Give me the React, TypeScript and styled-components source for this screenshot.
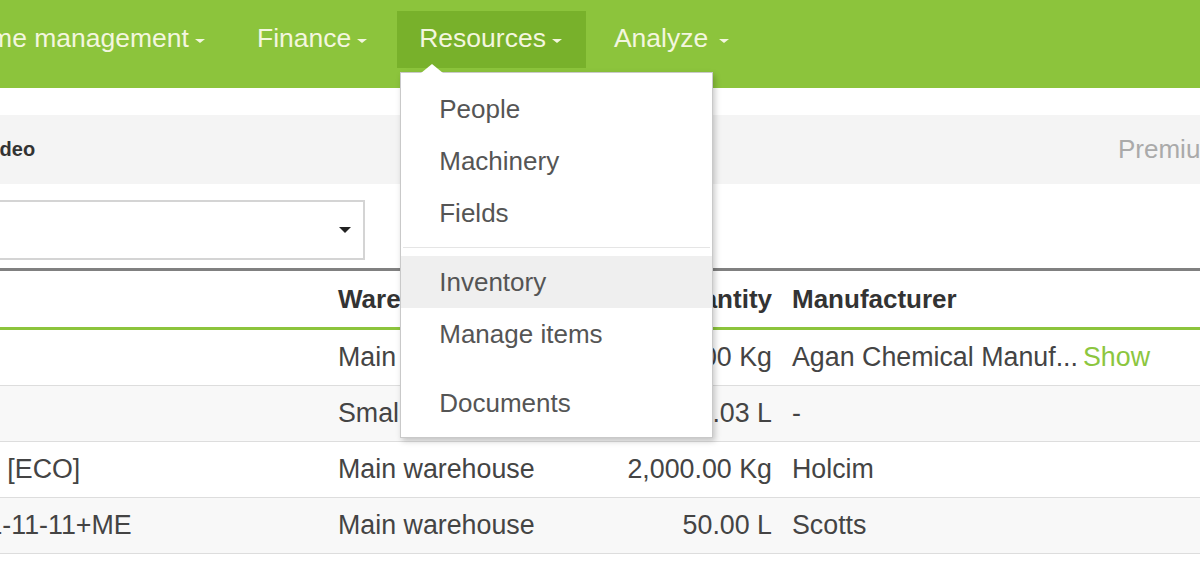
import styled, {createGlobalStyle} from "styled-components";

const GlobalStyle = createGlobalStyle`
  html, body {
    margin: 0;
    padding: 0;
    background: #fff;
    overflow: hidden;
  }
  body {
    font-family: "Liberation Sans", Arial, sans-serif;
  }
`

type NavEntry = { label: string, active?: boolean, wide?: boolean }

const navItems: NavEntry[] = [
    {label: "Time management"},
    {label: "Finance"},
    {label: "Resources", active: true},
    {label: "Analyze", wide: true},
]

type MenuEntry = { label?: string, hover?: boolean, divider?: "line" | "blank" }

const menuItems: MenuEntry[] = [
    {label: "People"},
    {label: "Machinery"},
    {label: "Fields"},
    {divider: "line"},
    {label: "Inventory", hover: true},
    {label: "Manage items"},
    {divider: "blank"},
    {label: "Documents"},
]

type StockRow = { name: string, warehouse: string, quantity: string, manufacturer: string, more?: boolean }

const rows: StockRow[] = [
    {name: "Urea", warehouse: "Main warehouse", quantity: "1,500.00 Kg", manufacturer: "Agan Chemical Manuf...", more: true},
    {name: "Diesel", warehouse: "Small warehouse", quantity: "120.03 L", manufacturer: "-"},
    {name: "Tomato [ECO]", warehouse: "Main warehouse", quantity: "2,000.00 Kg", manufacturer: "Holcim"},
    {name: "NPK 11-11-11+ME", warehouse: "Main warehouse", quantity: "50.00 L", manufacturer: "Scotts"},
]

const ResourcesMenu = () => (
    <Menu>
        {menuItems.map((item, i) =>
            item.divider
                ? <Divider key={i} $blank={item.divider === "blank"}/>
                : <MenuItem key={i} $hover={item.hover}>{item.label}</MenuItem>
        )}
    </Menu>
)

const App = () => {
    return (
        <Page>
            <GlobalStyle/>
            <NavBar>
                {navItems.map(item =>
                    <NavItem key={item.label} $active={item.active}>
                        {item.label}
                        <Caret $wide={item.wide}/>
                        {item.active && <ResourcesMenu/>}
                    </NavItem>
                )}
            </NavBar>
            <InfoBand>
                <BandLabel>Video</BandLabel>
                <Premium>Premium account</Premium>
            </InfoBand>
            <FilterArea>
                <Select>
                    <SelectCaret/>
                </Select>
            </FilterArea>
            <Table>
                <HeaderRow>
                    <Cell>Name</Cell>
                    <Cell>Warehouse</Cell>
                    <Cell $right>Quantity</Cell>
                    <Cell>Manufacturer</Cell>
                </HeaderRow>
                {rows.map((row, i) =>
                    <Row key={row.name} $striped={i % 2 === 1}>
                        <Cell>{row.name}</Cell>
                        <Cell>{row.warehouse}</Cell>
                        <Cell $right>{row.quantity}</Cell>
                        <Cell>
                            {row.manufacturer}
                            {row.more && <ShowLink>Show</ShowLink>}
                        </Cell>
                    </Row>
                )}
            </Table>
        </Page>
    )
}

export default App


const Page = styled.div`
  width: 1298px;
  margin-left: -98px;
  color: #444;
`

const NavBar = styled.nav`
  display: flex;
  align-items: flex-start;
  gap: 6px;
  height: 88px;
  box-sizing: border-box;
  padding: 11px 0 0 45px;
  background: #8cc43c;
`

const NavItem = styled.div<{ $active?: boolean }>`
  position: relative;
  display: flex;
  align-items: center;
  height: 57px;
  box-sizing: border-box;
  padding: 0 24px 3px 22px;
  font-size: 26.5px;
  white-space: nowrap;
  color: #f3f6df;
  background: ${p => p.$active ? "#78b12b" : "transparent"};
`

const Caret = styled.span<{ $wide?: boolean }>`
  width: 0;
  height: 0;
  margin: 5px 0 0 ${p => p.$wide ? "11px" : "6px"};
  border-left: 5.5px solid transparent;
  border-right: 5.5px solid transparent;
  border-top: 4.5px solid #f3f6df;
`

const Menu = styled.div`
  position: absolute;
  top: calc(100% + 4px);
  left: 3px;
  z-index: 10;
  width: 313px;
  box-sizing: border-box;
  padding: 10px 0 8px;
  background: #fff;
  border: 1px solid #c9c9c9;
  box-shadow: 2px 3px 6px rgba(0, 0, 0, 0.22);

  &::before {
    content: "";
    position: absolute;
    top: -9px;
    left: 20px;
    border-left: 11px solid transparent;
    border-right: 11px solid transparent;
    border-bottom: 9px solid #fff;
  }
`

const MenuItem = styled.div<{ $hover?: boolean }>`
  height: 52px;
  line-height: 52px;
  padding-left: 38px;
  font-size: 26px;
  color: #555;
  background: ${p => p.$hover ? "#efefef" : "transparent"};
`

const Divider = styled.div<{ $blank?: boolean }>`
  height: 1px;
  margin: 8px 2px;
  background: ${p => p.$blank ? "transparent" : "#e5e5e5"};
`

const InfoBand = styled.div`
  display: grid;
  grid-template-columns: 1137px auto;
  align-items: center;
  height: 69px;
  margin-top: 27px;
  padding-left: 79px;
  background: #f4f4f4;
  white-space: nowrap;
`

const BandLabel = styled.span`
  font-size: 20px;
  font-weight: bold;
  color: #333;
`

const Premium = styled.span`
  font-size: 26px;
  color: #aaa;
`

const FilterArea = styled.div`
  padding: 16px 0 8px 22px;
`

const Select = styled.div`
  display: flex;
  align-items: center;
  justify-content: flex-end;
  width: 441px;
  height: 60px;
  box-sizing: border-box;
  padding-right: 12px;
  border: 2px solid #d4d4d4;
  background: #fff;
`

const SelectCaret = styled.span`
  width: 0;
  height: 0;
  border-left: 6px solid transparent;
  border-right: 6px solid transparent;
  border-top: 6px solid #222;
`

const Table = styled.div`
  border-top: 3px solid #808080;
  font-size: 26.8px;
`

const Grid = styled.div`
  display: grid;
  grid-template-columns: 426px 282px 172px 1fr;
  align-items: center;
  height: 56px;
  box-sizing: border-box;
  white-space: nowrap;
`

const HeaderRow = styled(Grid)`
  height: 59px;
  font-size: 26px;
  font-weight: bold;
  color: #333;
  border-bottom: 3px solid #8cc43c;
`

const Row = styled(Grid)<{ $striped?: boolean }>`
  border-bottom: 1px solid #ddd;
  background: ${p => p.$striped ? "#f8f8f8" : "#fff"};
`

const Cell = styled.div<{ $right?: boolean }>`
  padding: 0 10px;
  text-align: ${p => p.$right ? "right" : "left"};
`

const ShowLink = styled.span`
  margin-left: 5px;
  color: #8cc63f;
`
